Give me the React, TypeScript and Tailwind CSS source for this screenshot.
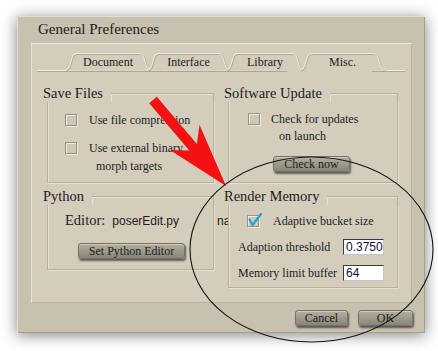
import React from "react";

const serif = "font-['Liberation_Serif','Times_New_Roman',serif]";
const sans = "font-['Liberation_Sans',Arial,sans-serif]";

function Tab({ label, w, active }: { label: string; w: number; active?: boolean }) {
  const d = `M0,17 C3,17 4.5,14 5.5,10 L7.5,3.5 Q8.5,0.5 12,0.5 L${w - 12},0.5 Q${w - 8.5},0.5 ${w - 7.5},3.5 L${w - 5.5},10 C${w - 4.5},14 ${w - 3},17 ${w},17`;
  return (
    <div
      className={`relative h-[17px] flex items-center justify-center text-[12px] text-[#1c1c1c] -mr-[4px] ${active ? "z-10" : ""}`}
      style={{ width: w }}
    >
      <svg className="absolute inset-0 overflow-visible" width={w} height={17} viewBox={`0 0 ${w} 17`}>
        <path d={d} fill="#d4cdbc" stroke="#a9a18f" strokeWidth="1" transform="translate(0.8,0.8)" />
        <path d={d} fill="none" stroke="#f1ece2" strokeWidth="1" />
      </svg>
      <span className="relative leading-none pt-[1px]">{label}</span>
    </div>
  );
}

function Box({ checked }: { checked?: boolean }) {
  return (
    <span className="relative block w-[12px] h-[12px] shrink-0 border border-[#9a9382] bg-[#cfc8b7] shadow-[inset_1px_1px_0_#efe9de,1px_1px_0_#eee8dc]">
      {checked && (
        <svg className="absolute left-0 -top-[2px] overflow-visible" width="14" height="14" viewBox="0 0 14 14">
          <path d="M1.5,5.5 L4.5,11 L13,0" fill="none" stroke="#1aa8d6" strokeWidth="2.2" strokeLinecap="round" strokeLinejoin="round" />
        </svg>
      )}
    </span>
  );
}

function Btn({ label, w }: { label: string; w: number }) {
  return (
    <div
      className="h-[16px] flex items-center justify-center rounded-[3px] border border-[#75716a] bg-linear-to-b from-[#b3af9f] to-[#8a8677] shadow-[inset_0_1px_0_#cfcbbd,1px_2px_2px_rgba(0,0,0,0.55)] text-[12px] text-[#1c1c1c] leading-none"
      style={{ width: w }}
    >
      {label}
    </div>
  );
}

function Group({ title, bodyH, children }: { title: string; bodyH: number; children: React.ReactNode }) {
  return (
    <div className="flex flex-col">
      <div className="flex h-[18px] items-center">
        <span className="text-[14.5px] leading-none pr-[8px] text-[#1c1c1c]">{title}</span>
        <div className="flex-1 h-[9px] self-end border-t border-r border-[#b8af9c] shadow-[inset_1px_1px_0_#e6e0d3]" />
      </div>
      <div
        className="ml-[4px] border-l border-r border-b border-[#b8af9c] shadow-[inset_1px_0_0_#e6e0d3,1px_1px_0_#e6e0d3]"
        style={{ height: bodyH }}
      >
        {children}
      </div>
    </div>
  );
}

export default function App() {
  return (
    <div className={`relative w-[438px] h-[351px] overflow-hidden bg-white ${serif}`}>
      <div className="ml-[17px] mt-[16px] w-[408px] h-[317px] flex flex-col bg-[#c8c1b0] shadow-[inset_1px_1px_0_#e4ded1,inset_-1px_-1px_0_#a8a08f,0_2px_14px_rgba(0,0,0,0.5)]">
        {/* Title */}
        <div className="h-[27px] pl-[21px] flex items-center text-[15px] text-[#1c1c1c]">General Preferences</div>

        {/* Inner panel */}
        <div className="ml-[14px] w-[381px] h-[260px] flex flex-col pt-[10px] bg-[#d4cdbc] shadow-[inset_1px_1px_0_#e8e3d7,inset_-1px_-1px_0_#bab29f]">
          <div className="flex pl-[34px]">
            <Tab label="Document" w={86} />
            <Tab label="Interface" w={83} />
            <Tab label="Library" w={78} />
            <Tab label="Misc." w={85} active />
          </div>
          <div className="flex ml-[6px] mr-[7px]">
            <div className="w-[250px] h-[2px] border-t border-[#f2ede3] border-b border-b-[#aea592]" />
            <div className="w-[85px]" />
            <div className="flex-1 h-[2px] border-t border-[#f2ede3] border-b border-b-[#aea592]" />
          </div>

          {/* Groups */}
          <div className="mt-[12px] pl-[12px] grid grid-cols-[171px_174px] gap-x-[10px] gap-y-[4px] text-[#1c1c1c]">
            <Group title="Save Files" bodyH={81}>
              <div className="pt-[11px] pl-[17px] text-[12px]">
                <div className="flex items-center h-[14px] gap-[12px]">
                  <Box />
                  <span>Use file compression</span>
                </div>
                <div className="flex items-center h-[14px] gap-[12px] mt-[14px]">
                  <Box />
                  <span>Use external binary</span>
                </div>
                <div className="h-[14px] mt-[4px] pl-[31px] flex items-center">morph targets</div>
              </div>
            </Group>

            <Group title="Software Update" bodyH={81}>
              <div className="pt-[10px] pl-[19px] text-[12px]">
                <div className="flex items-center h-[14px] gap-[11px]">
                  <Box />
                  <span>Check for updates</span>
                </div>
                <div className="h-[14px] mt-[3px] pl-[31px] flex items-center">on launch</div>
                <div className="mt-[13px] ml-[25px]">
                  <Btn label="Check now" w={77} />
                </div>
              </div>
            </Group>

            <Group title="Python" bodyH={65}>
              <div className="pt-[7px] pl-[17px]">
                <div className="flex items-center h-[18px] whitespace-nowrap">
                  <span className="text-[14.5px]">Editor:</span>
                  <span className={`ml-[7px] text-[12px] ${sans}`}>poserEdit.py</span>
                  <span className={`ml-[38px] text-[12px] ${sans}`}>na</span>
                </div>
                <div className="mt-[13px] ml-[13px]">
                  <Btn label="Set Python Editor" w={107} />
                </div>
              </div>
            </Group>

            <Group title="Render Memory" bodyH={83}>
              <div className="pt-[9px] pl-[9px] text-[12px]">
                <div className="flex items-center h-[14px] gap-[14px] ml-[9px]">
                  <Box checked />
                  <span>Adaptive bucket size</span>
                </div>
                <div className="mt-[10px] grid grid-cols-[105px_41px] gap-y-[8px] items-center">
                  <span>Adaption threshold</span>
                  <div className={`h-[16px] bg-white border border-t-[#3c3c3c] border-l-[#3c3c3c] border-r-[#c4c4c4] border-b-[#c4c4c4] pl-[2px] flex items-center text-[12px] leading-none text-[#121230] ${sans}`}>
                    0.3750
                  </div>
                  <span>Memory limit buffer</span>
                  <div className={`h-[16px] bg-white border border-t-[#3c3c3c] border-l-[#3c3c3c] border-r-[#c4c4c4] border-b-[#c4c4c4] pl-[2px] flex items-center text-[12px] leading-none text-[#121230] ${sans}`}>
                    64
                  </div>
                </div>
              </div>
            </Group>
          </div>
        </div>

        {/* Bottom buttons */}
        <div className="flex justify-end gap-[10px] pr-[12px] pt-[7px]">
          <Btn label="Cancel" w={53} />
          <Btn label="OK" w={55} />
        </div>
      </div>

      {/* Annotation overlay: red arrow and circle */}
      <svg className="absolute inset-0 pointer-events-none" width="438" height="351" viewBox="0 0 438 351">
        <polygon
          points="156.8,96.8 196.9,144 199.5,124.7 226,186 169.9,149.9 189.3,150.4 149.2,103.2"
          fill="#f51111"
        />
        <ellipse cx="311.5" cy="249.5" rx="121.5" ry="92.5" fill="none" stroke="#111" strokeWidth="1.1" />
      </svg>
    </div>
  );
}
